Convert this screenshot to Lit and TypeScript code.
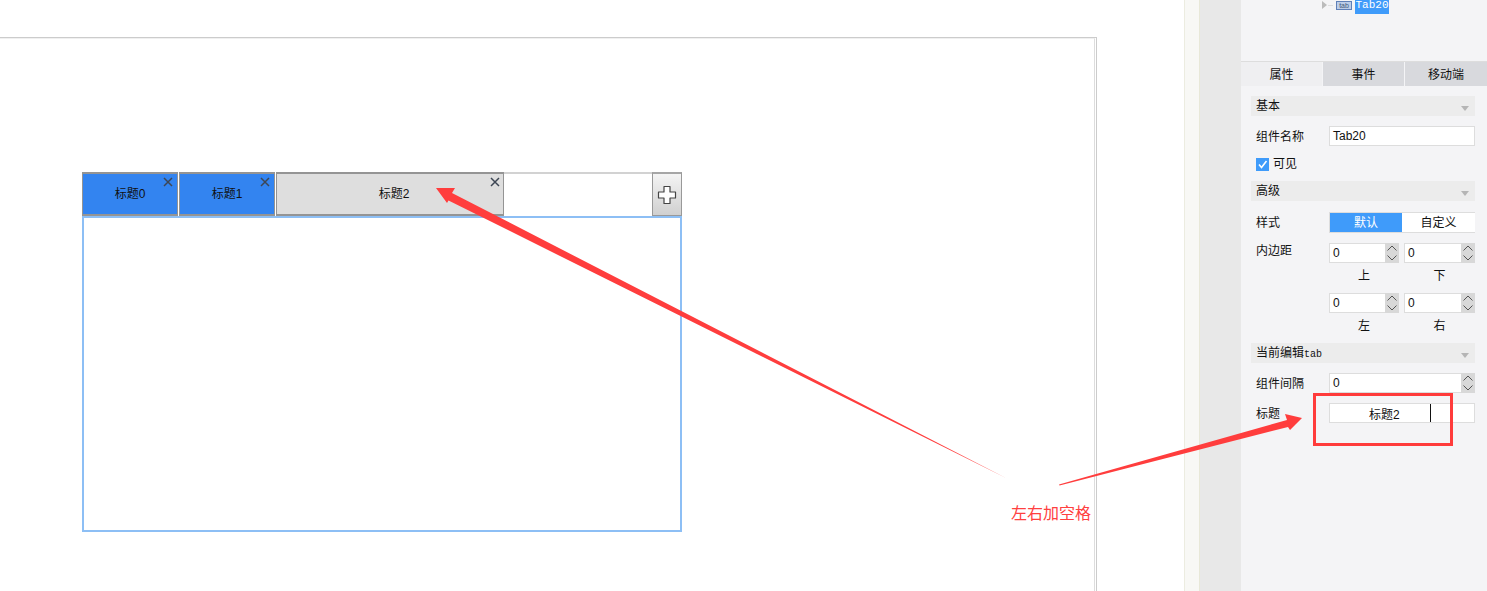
import { LitElement, html, css, svg } from "lit";
import { customElement } from "lit/decorators.js";

const closeIcon = html`<svg class="x" width="10" height="10" viewBox="0 0 10 10"><path d="M1 1L9 9M9 1L1 9" stroke="#3d4654" stroke-width="1.5" fill="none"/></svg>`;
const chevrons = html`<span class="stepper"><svg width="14" height="20" viewBox="0 0 14 20"><path d="M2.5 7.5L7 3L11.5 7.5M2.5 12.5L7 17L11.5 12.5" stroke="#555" stroke-width="1" fill="none"/></svg></span>`;
const caret = html`<svg class="caret" width="8" height="5" viewBox="0 0 8 5"><path d="M0 0H8L4 5Z" fill="#b5b5b5"/></svg>`;

@customElement("app-root")
export class AppRoot extends LitElement {
  static styles = css`
    :host { display: block; width: 1487px; height: 591px; position: relative; overflow: hidden; background: #fff;
      font-family: "Liberation Sans", "Noto Sans CJK SC", sans-serif; font-size: 12px; color: #111; }
    .root { display: flex; height: 591px; }
    .main { width: 1184px; flex: none; padding-top: 37px; box-sizing: border-box; }
    .page { width: 1097px; height: 554px; box-sizing: border-box; border-top: 1px solid #ccc; border-right: 1px solid #ccc; }
    .page-in { height: 100%; box-sizing: border-box; margin-right: 1px; border-right: 1px solid #ddd; border-top: 1px solid #f0f0f0;
      padding: 133px 0 0 82px; }
    .widget { width: 600px; }
    .bar { display: flex; height: 44px; box-sizing: border-box; }
    .tab { position: relative; box-sizing: border-box; display: flex; align-items: center; justify-content: center;
      border-style: solid; border-color: #949494; border-width: 2px 1px 2px 1px; padding-bottom: 4px; }
    .tab.blue { width: 96px; background: #3384f0; margin-right: 1px; }
    .tab.grey { width: 228px; background: #dedede; padding-left: 8px; }
    .x { position: absolute; top: 3px; right: 4px; }
    .tab.grey .x { right: 3px; }
    .spacer { flex: 1; border-top: 2px solid #d2d2d2; }
    .add { width: 30px; box-sizing: border-box; border: 1px solid #999; border-top: 2px solid #a6a6a6; background: linear-gradient(#f4f4f4, #d0d0d0);
      display: flex; align-items: center; justify-content: center; }
    .content { height: 316px; box-sizing: border-box; border: 2px solid #8dbff5; }
    .strip { width: 16px; flex: none; box-sizing: border-box; background: #f8f8f5; border-left: 1px solid #ecece0; border-right: 1px solid #e8e8d8; }
    .gutter { width: 41px; flex: none; background: #e8e8e8; }
    .panel { width: 246px; flex: none; background: #f4f4f6; display: flex; flex-direction: column; }
    .tree { height: 61px; flex: none; box-sizing: border-box; padding-left: 81px; display: flex; align-items: flex-start; }
    .tree-arrow { margin-top: 1px; width: 0; height: 0; border-left: 5px solid #bbb; border-top: 4px solid transparent; border-bottom: 4px solid transparent; }
    .tree-line { width: 5px; height: 1px; margin: 5px 3px 0 1px; background: #ddd; }
    .tree-icon { width: 14px; height: 7px; margin-top: 1px; border: 1px solid #5f80b8; background: #bccde8; color: #44597a;
      font: 7px/7px "Liberation Sans", sans-serif; text-align: center; }
    .tree-label { margin-left: 3px; width: 34px; height: 14px; background: #3f9bfa; color: #fff; font: 11px/11px "Liberation Mono", monospace; text-align: center; }
    .tabs { display: flex; height: 25px; flex: none; box-sizing: border-box; border-top: 1px solid #ddd; }
    .ptab { display: flex; align-items: center; justify-content: center; width: 81px; margin-right: 1px; background: #d8d9dd; padding-bottom: 2px; box-sizing: border-box; }
    .ptab.on { width: 81px; background: #efeff1; }
    .ptab:last-child { margin-right: 0; flex: 1; }
    .body { padding: 10px 12px 0 10px; display: flex; flex-direction: column; }
    .section { height: 20px; background: #ececec; display: flex; align-items: center; justify-content: space-between; padding: 0 6px 0 5px; flex: none; }
    .section > span { margin-bottom: 4px; }
    .s-adv { margin-top: 10px; }
    .s-tab { margin-top: 7px; }
    .caret { margin-top: 5px; }
    .mono { font: 10px "Liberation Mono", monospace; letter-spacing: 0; }
    .row { display: flex; align-items: center; height: 20px; margin-top: 10px; flex: none; }
    .row.r-seg { height: 21px; margin-top: 11px; }
    .lab { width: 78px; padding-left: 5px; box-sizing: border-box; flex: none; margin-bottom: 2px; }
    .lab.raised { margin-bottom: 8px; }
    .field { position: relative; flex: 1; height: 20px; box-sizing: border-box; background: #fff; border: 1px solid #ddd; padding-left: 3px; display: flex; align-items: center; }
    .check { display: flex; align-items: center; gap: 4px; padding-left: 5px; height: 14px; margin-top: 11px; flex: none; }
    .check > span:last-child { margin-bottom: 4px; }
    .box { width: 13px; height: 13px; background: #3f9bfa; display: flex; align-items: center; justify-content: center; }
    .seg { flex: 1; display: flex; height: 21px; box-sizing: border-box; border: 1px solid #ddd; border-right: 0; background: #fff; }
    .seg > div { display: flex; align-items: center; justify-content: center; padding-bottom: 2px; box-sizing: border-box; }
    .seg .on { width: 72px; background: #3f9bfa; color: #fff; }
    .seg .off { flex: 1; }
    .pad { display: flex; gap: 5px; flex: 1; }
    .num { position: relative; flex: 1; height: 20px; box-sizing: border-box; background: #fff; border: 1px solid #ddd; padding-left: 3px; display: flex; align-items: center; }
    .num.first { flex: none; width: 70px; }
    .stepper { position: absolute; right: -1px; top: -1px; width: 14px; height: 20px; background: #d8d8d8; }
    .stepper svg { display: block; }
    .cap { display: flex; gap: 5px; padding: 1px 0 0 78px; height: 20px; box-sizing: content-box; align-items: center; flex: none; margin-bottom: -1px; }
    .cap.second { padding-top: 1px; margin-bottom: 2px; }
    .cap span { flex: 1; text-align: center; }
    .cap span:first-child { flex: none; width: 70px; }
    .cursor { position: absolute; left: 100px; top: 0; width: 1px; height: 18px; background: #111; }
    .centered { padding-left: 39px; }
    .over { position: absolute; inset: 0; pointer-events: none; }
    .note { position: absolute; left: 1011px; top: 504px; color: #ff4040; font-size: 16px; line-height: 20px; white-space: nowrap; }
  `;

  render() {
    return html`
      <div class="root">
        <div class="main">
          <div class="page"><div class="page-in">
            <div class="widget">
              <div class="bar">
                <div class="tab blue">标题0${closeIcon}</div>
                <div class="tab blue">标题1${closeIcon}</div>
                <div class="tab grey">标题2${closeIcon}</div>
                <div class="spacer"></div>
                <div class="add"><svg width="20" height="20" viewBox="0 0 20 20"><path d="M7 1.5H13V7H18.5V13H13V18.5H7V13H1.5V7H7Z" fill="#fff" stroke="#444" stroke-width="1.2" stroke-linejoin="round"/></svg></div>
              </div>
              <div class="content"></div>
            </div>
          </div></div>
        </div>
        <div class="strip"></div>
        <div class="gutter"></div>
        <div class="panel">
          <div class="tree">
            <span class="tree-arrow"></span><span class="tree-line"></span>
            <span class="tree-icon">tab</span><span class="tree-label">Tab20</span>
          </div>
          <div class="tabs">
            <div class="ptab on">属性</div><div class="ptab">事件</div><div class="ptab">移动端</div>
          </div>
          <div class="body">
            <div class="section"><span>基本</span>${caret}</div>
            <div class="row"><span class="lab">组件名称</span><div class="field">Tab20</div></div>
            <div class="check"><span class="box"><svg width="11" height="11" viewBox="0 0 11 11"><path d="M2 5.5L4.5 8.5L9.5 2" stroke="#fff" stroke-width="1.6" fill="none"/></svg></span><span>可见</span></div>
            <div class="section s-adv"><span>高级</span>${caret}</div>
            <div class="row r-seg"><span class="lab">样式</span>
              <div class="seg"><div class="on">默认</div><div class="off">自定义</div></div></div>
            <div class="row"><span class="lab raised">内边距</span>
              <div class="pad"><div class="num first">0${chevrons}</div><div class="num">0${chevrons}</div></div></div>
            <div class="cap"><span>上</span><span>下</span></div>
            <div class="row"><span class="lab"></span>
              <div class="pad"><div class="num first">0${chevrons}</div><div class="num">0${chevrons}</div></div></div>
            <div class="cap second"><span>左</span><span>右</span></div>
            <div class="section s-tab"><span>当前编辑<span class="mono">tab</span></span>${caret}</div>
            <div class="row"><span class="lab">组件间隔</span><div class="field">0${chevrons}</div></div>
            <div class="row"><span class="lab">标题</span><div class="field centered">标题2<span class="cursor"></span></div></div>
          </div>
        </div>
      </div>
      <svg class="over" width="1487" height="591" viewBox="0 0 1487 591">
        ${svg`
          <polygon points="436,188 455,188 452,193 1006,478 448.5,200.5 447,203" fill="#ff3d3d"/>
          <polygon points="1302,418 1285,414 1287,420 1059,484.5 1059.5,485.5 1288,427 1290,430" fill="#ff3d3d"/>
          <rect x="1314.5" y="394.5" width="137" height="50" fill="none" stroke="#ff3b3b" stroke-width="3"/>
        `}
      </svg>
      <div class="note">左右加空格</div>
    `;
  }
}
